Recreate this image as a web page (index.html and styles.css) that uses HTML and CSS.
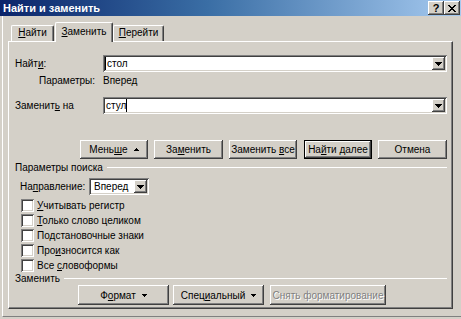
FILE: index.html
```html
<!DOCTYPE html>
<html lang="ru">
<head>
<meta charset="utf-8">
<title>Найти и заменить</title>
<link rel="stylesheet" href="styles.css">
</head>
<body>
<div class="titlebar">
  <span class="title">Найти и заменить</span>
  <span class="tb-btn help">?</span>
  <span class="tb-btn close"><svg width="8" height="7" viewBox="0 0 8 7" shape-rendering="crispEdges"><rect x="0" y="0" width="2" height="1"/><rect x="6" y="0" width="2" height="1"/><rect x="1" y="1" width="2" height="1"/><rect x="5" y="1" width="2" height="1"/><rect x="2" y="2" width="4" height="1"/><rect x="3" y="3" width="2" height="1"/><rect x="2" y="4" width="4" height="1"/><rect x="1" y="5" width="2" height="1"/><rect x="5" y="5" width="2" height="1"/><rect x="0" y="6" width="2" height="1"/><rect x="6" y="6" width="2" height="1"/></svg></span>
</div>
<div class="frame">
  <div class="tabs">
    <div class="tab t1"><u>Н</u>айти</div>
    <div class="tab t2 active"><u>З</u>аменить</div>
    <div class="tab t3"><u>П</u>ерейти</div>
  </div>
  <div class="panel">
    <div class="field-row">
      <span class="field-label">Найт<u>и</u>:</span>
      <div class="combo"><span class="caret"></span><span class="val">стол</span><span class="dd"><svg width="7" height="4" shape-rendering="crispEdges"><rect x="0" y="0" width="7" height="1"/><rect x="1" y="1" width="5" height="1"/><rect x="2" y="2" width="3" height="1"/><rect x="3" y="3" width="1" height="1"/></svg></span></div>
    </div>
    <div class="params"><span class="params-label">Параметры:</span><span>Вперед</span></div>
    <div class="field-row row3">
      <span class="field-label">Заменит<u>ь</u> на</span>
      <div class="combo"><span class="val">стул</span><span class="caret"></span><span class="dd"><svg width="7" height="4" shape-rendering="crispEdges"><rect x="0" y="0" width="7" height="1"/><rect x="1" y="1" width="5" height="1"/><rect x="2" y="2" width="3" height="1"/><rect x="3" y="3" width="1" height="1"/></svg></span></div>
    </div>
    <div class="btn-row">
      <span class="btn w68"><span>Мень<u>ш</u>е</span><svg class="tri" width="5" height="3" shape-rendering="crispEdges"><rect x="2" y="0" width="1" height="1"/><rect x="1" y="1" width="3" height="1"/><rect x="0" y="2" width="5" height="1"/></svg></span>
      <span class="btn w69"><span>За<u>м</u>енить</span></span>
      <span class="btn w68"><span>Заменить <u>в</u>се</span></span>
      <span class="btn w68 default"><span>На<u>й</u>ти далее</span></span>
      <span class="btn w69"><span>Отмена</span></span>
    </div>
    <div class="group"><span>Параметры поиска</span><span class="line"></span></div>
    <div class="dir-row">
      <span class="dir-label">На<u>п</u>равление:</span>
      <div class="combo small"><span class="val">Вперед</span><span class="dd"><svg width="7" height="4" shape-rendering="crispEdges"><rect x="0" y="0" width="7" height="1"/><rect x="1" y="1" width="5" height="1"/><rect x="2" y="2" width="3" height="1"/><rect x="3" y="3" width="1" height="1"/></svg></span></div>
    </div>
    <ul class="checks">
      <li><span class="cb"></span><span><u>У</u>читывать регистр</span></li>
      <li><span class="cb"></span><span><u>Т</u>олько слово целиком</span></li>
      <li><span class="cb"></span><span>По<u>д</u>становочные знаки</span></li>
      <li><span class="cb"></span><span>Про<u>и</u>зносится как</span></li>
      <li><span class="cb"></span><span>Все <u>с</u>ловоформы</span></li>
    </ul>
    <div class="group g2"><span>Заменить</span><span class="line"></span></div>
    <div class="bottom-row">
      <span class="btn b-fmt"><span>Ф<u>о</u>рмат</span><svg class="tri" width="5" height="3" shape-rendering="crispEdges"><rect x="0" y="0" width="5" height="1"/><rect x="1" y="1" width="3" height="1"/><rect x="2" y="2" width="1" height="1"/></svg></span>
      <span class="btn b-spec"><span>Спец<u>и</u>альный</span><svg class="tri" width="5" height="3" shape-rendering="crispEdges"><rect x="0" y="0" width="5" height="1"/><rect x="1" y="1" width="3" height="1"/><rect x="2" y="2" width="1" height="1"/></svg></span>
      <span class="btn b-clear disabled"><span>Снять форматирование</span></span>
    </div>
  </div>
</div>
</body>
</html>
```
FILE: styles.css
```css
* { box-sizing: border-box; }

body {
  margin: 0;
  width: 461px;
  height: 319px;
  overflow: hidden;
  background: #d4d0c8;
  font: 10px "Liberation Sans", Arial, sans-serif;
  color: #000;
  white-space: nowrap;
}

u { text-decoration: underline; text-underline-offset: 1px; }

.titlebar {
  height: 16px;
  display: flex;
  align-items: center;
  padding: 0 1px 0 3px;
  background: linear-gradient(to right, #0a246a 0%, #3a6ea5 45%, #a6caf0 100%);
}

.title {
  flex: 1;
  color: #fff;
  font-weight: bold;
  font-size: 11px;
}

.tb-btn {
  width: 16px;
  height: 14px;
  display: flex;
  align-items: center;
  justify-content: center;
  background: #d4d0c8;
  box-shadow: inset -1px -1px #404040, inset 1px 1px #fff, inset -2px -2px #808080;
  font-weight: bold;
  font-size: 11px;
  line-height: 14px;
}

.frame {
  margin-left: 2px;
  height: 301px;
  border-left: 1px solid #fff;
  border-bottom: 1px solid #808080;
}

.tabs {
  height: 25px;
  display: flex;
  align-items: flex-end;
  padding-left: 8px;
}

.tab {
  height: 16px;
  line-height: 14px;
  text-align: center;
  border-top: 1px solid #fff;
  border-left: 1px solid #fff;
  border-right: 1px solid #404040;
  border-radius: 2px 2px 0 0;
  box-shadow: inset -1px 0 #808080;
  background: #d4d0c8;
}

.t1 { width: 43px; }
.t2 { width: 58px; margin-left: 1px; }
.t3 { width: 51px; }

.tab.active {
  height: 20px;
  line-height: 17px;
  margin-bottom: -1px;
  position: relative;
  z-index: 1;
}

.panel {
  margin-left: 5px;
  width: 445px;
  height: 268px;
  border-top: 1px solid #fff;
  border-left: 1px solid #fff;
  border-right: 1px solid #404040;
  border-bottom: 1px solid #404040;
  box-shadow: inset -1px -1px #808080;
  padding: 13px 5px 0 6px;
}

.field-row {
  display: flex;
  align-items: center;
  height: 17px;
}

.row3 { margin-top: 10px; }

.field-label { width: 88px; }

.combo {
  flex: 1;
  height: 17px;
  display: flex;
  align-items: center;
  padding: 2px;
  background: #fff;
  box-shadow: inset 1px 1px #808080, inset -1px -1px #fff, inset 2px 2px #404040, inset -2px -2px #d4d0c8;
}

.combo .val { padding-left: 1px; }

.caret {
  width: 1px;
  height: 13px;
  background: #000;
}

.dd {
  margin-left: auto;
  width: 13px;
  height: 13px;
  display: flex;
  align-items: center;
  justify-content: center;
  background: #d4d0c8;
  box-shadow: inset -1px -1px #404040, inset 1px 1px #fff, inset -2px -2px #808080;
}

.params {
  display: flex;
  margin-top: 2px;
  line-height: 13px;
  padding-left: 24px;
}

.params-label { width: 64px; }

.btn-row {
  margin-top: 26px;
  display: flex;
  justify-content: flex-end;
  gap: 6px;
}

.btn {
  height: 19px;
  display: flex;
  align-items: center;
  justify-content: center;
  gap: 6px;
  background: #d4d0c8;
  box-shadow: inset -1px -1px #404040, inset 1px 1px #fff, inset -2px -2px #808080;
}

.w68 { width: 68px; }
.w69 { width: 69px; }

.btn.default {
  margin-left: 1px;
  border: 1px solid #000;
  box-shadow: inset -1px -1px #404040, inset 1px 1px #fff, inset -2px -2px #808080;
}

.group {
  margin-top: 2px;
  height: 13px;
  display: flex;
  align-items: center;
}

.group .line {
  flex: 1;
  margin-left: 4px;
  border-top: 1px solid #fff;
}

.g2 { margin-top: 0; }

.dir-row {
  margin-top: 4px;
  padding-left: 5px;
  display: flex;
  align-items: center;
  height: 17px;
}

.dir-label { width: 69px; }

.combo.small {
  flex: none;
  width: 60px;
}

.combo.small .val { padding-left: 3px; }

.checks {
  list-style: none;
  margin: 4px 0 0;
  padding: 0 0 0 6px;
  display: flex;
  flex-direction: column;
  gap: 2px;
}

.checks li {
  height: 13px;
  display: flex;
  align-items: center;
  gap: 3px;
}

.cb {
  width: 13px;
  height: 13px;
  background: #fff;
  box-shadow: inset 1px 1px #808080, inset -1px -1px #fff, inset 2px 2px #404040, inset -2px -2px #d4d0c8;
}

.bottom-row {
  display: flex;
  height: 20px;
  padding-left: 63px;
}

.bottom-row .btn { height: 20px; }

.b-fmt { width: 91px; }
.b-spec { width: 91px; margin-left: 4px; }
.b-clear { width: 116px; margin-left: 6px; }

.btn.disabled {
  color: #808080;
  text-shadow: 1px 1px #fff;
}
```
